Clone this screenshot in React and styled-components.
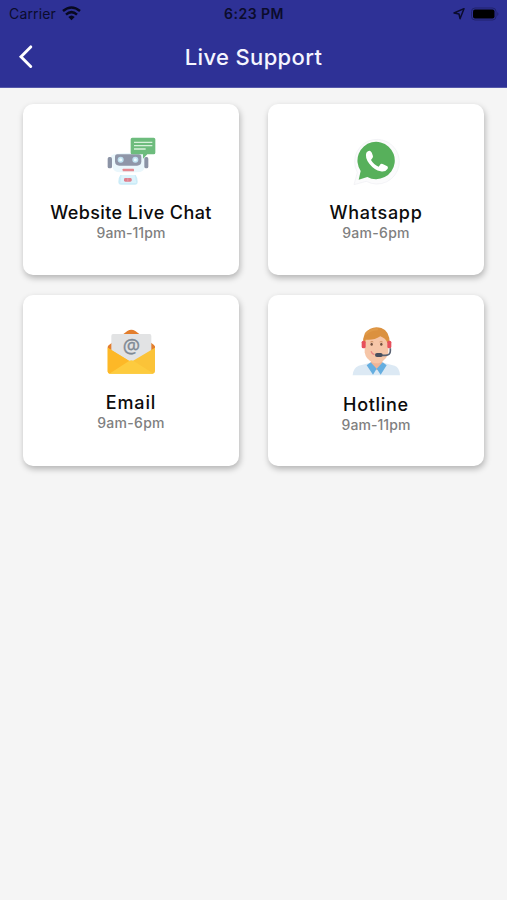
import React from 'react'
import styled, { createGlobalStyle } from 'styled-components'

const GlobalStyle = createGlobalStyle`
  * {
    box-sizing: border-box;
  }
  body {
    margin: 0;
    background-color: #f5f5f5;
    font-family: Inter, "Liberation Sans", sans-serif;
  }
`

const Screen = styled.div`
  min-height: 100vh;
  background-color: #f5f5f5;
`

const HeaderWrapper = styled.header`
  height: 88px;
  background-color: #2e3196;
  border-bottom: 1px solid #5558aa;
`

const StatusBar = styled.div`
  display: grid;
  grid-template-columns: 1fr auto 1fr;
  align-items: center;
  height: 27px;
  padding: 0 8px 0 9px;
  color: #0b0c2c;
  font-size: 14px;
`

const StatusGroup = styled.div`
  display: flex;
  align-items: center;
  justify-content: ${props => props.$end ? 'flex-end' : 'flex-start'};
  gap: ${props => props.$gap}px;
`

const Carrier = styled.span`
  letter-spacing: 0.15px;
`

const Clock = styled.span`
  font-weight: 600;
  letter-spacing: 0.5px;
`

const NavBar = styled.div`
  display: grid;
  grid-template-columns: 60px 1fr 60px;
  align-items: center;
  height: 60px;
`

const BackButton = styled.button`
  display: flex;
  align-items: center;
  height: 44px;
  padding: 0 0 0 18px;
  border: none;
  background: none;
`

const NavTitle = styled.h1`
  margin: 0;
  color: #f5f5ff;
  font-size: 22px;
  font-weight: 500;
  letter-spacing: 0.35px;
  line-height: 28px;
  text-align: center;
`

const CardGrid = styled.main`
  display: grid;
  grid-template-columns: 1fr 1fr;
  grid-auto-rows: 171px;
  gap: 20px 29px;
  padding: 16px 23px;
`

const Card = styled.section`
  display: flex;
  flex-direction: column;
  align-items: center;
  padding-top: 31px;
  border-radius: 10px;
  background-color: #fff;
  box-shadow: 1px 3px 6px rgba(0, 0, 0, 0.27);
`

const CardTitle = styled.h2`
  margin: ${props => props.$gap}px 0 0;
  color: #0c0c0c;
  font-size: 18px;
  font-weight: 500;
  letter-spacing: ${props => props.$spacing}px;
  line-height: 24px;
  white-space: nowrap;
`

const CardHours = styled.p`
  margin: 0;
  color: #808080;
  font-size: 14px;
  font-weight: 500;
  letter-spacing: ${props => props.$spacing}px;
  line-height: 15px;
`

const Icon = styled.svg`
  display: block;
  flex: none;
`

const WifiIcon = () => (
    <Icon width="19" height="15" viewBox="0 0 57 45" fill="none" stroke="#080920" strokeWidth="7.5">
        <path d="M3 15Q28.500 -6 54 15" />
        <path d="M12 26Q28.500 11 45 26" />
        <path d="M19 33Q28.500 24 38 33L28.500 43Z" fill="#080920" stroke="none" />
    </Icon>
)

const LocationIcon = () => (
    <Icon width="12" height="13" viewBox="0 0 36 39" fill="none" stroke="#0b0c2c" strokeWidth="4.500" strokeLinejoin="round">
        <path d="M3 18L33 5L21 35L18 21Z" />
    </Icon>
)

const BatteryIcon = () => (
    <Icon width="28" height="14" viewBox="0 0 28 14">
        <rect x="0.500" y="1" width="24.500" height="12" rx="3.500" fill="none" stroke="#20236d" />
        <rect x="2" y="2.500" width="21.500" height="9" rx="2" fill="#000" />
        <path d="M26.300 5Q28.500 7 26.300 9Z" fill="#20236d" />
    </Icon>
)

const BackIcon = () => (
    <Icon width="15" height="24" viewBox="0 0 15 24" fill="none" stroke="#fff" strokeWidth="2.900" strokeLinecap="round">
        <path d="M12.700 1.900L3 11.700L12.700 21.500" />
    </Icon>
)

const RobotIcon = () => (
    <Icon width="50" height="50" viewBox="33 30 150 150">
        <path d="M48 92Q58 84 100 84T150 92V122Q148 142 126 142H76Q54 142 52 122Z" fill="#eaf7fc" />
        <rect x="38" y="96" width="13" height="34" rx="5" fill="#8b93a5" />
        <rect x="148" y="96" width="12" height="34" rx="5" fill="#8b93a5" />
        <path d="M67 88H131Q139 88 139 96V109Q139 122 126 122H73Q60 122 60 109V96Q60 88 67 88Z" fill="#8f96a8" />
        <circle cx="77" cy="104" r="9" fill="#bfe2f1" />
        <circle cx="121" cy="104" r="9" fill="#bfe2f1" />
        <circle cx="77" cy="104" r="4.500" fill="#eefaff" />
        <circle cx="121" cy="104" r="4.500" fill="#eefaff" />
        <rect x="83" y="131" width="34" height="8" rx="2" fill="#e58991" />
        <path d="M76 150H122Q128 158 128 170Q128 179 120 179H78Q70 179 70 170Q70 158 76 150Z" fill="#ccecf8" />
        <path d="M80 150H119L124 174H76Z" fill="#dcf3fc" />
        <rect x="87" y="159" width="23" height="11" rx="4" fill="#df7f8d" />
        <path d="M98.500 160V169" stroke="#ecb1bd" strokeWidth="2" />
        <path d="M112 38H176Q181 38 181 43V83Q181 88 176 88H157L144 101V88H112Q107 88 107 83V43Q107 38 112 38Z" fill="#6dbc7d" />
        <path d="M117 52H172M117 62H172M117 72H152" stroke="#d7f1db" strokeWidth="4" />
    </Icon>
)

const WhatsappIcon = () => (
    <Icon width="50" height="50" viewBox="33 30 150 150">
        <path d="M42 179L52 142A67 67 0 1 1 79 169Z" fill="#fbfbfc" stroke="#eeeef3" strokeWidth="2" />
        <path d="M56 164L62 138A56 56 0 1 1 82 156Z" fill="#57b05b" />
        <path d="M79 83Q85 76 91 78Q96 81 99 94Q100 98 93 105Q101 119 116 125L122 117Q124 115 128 117L142 124Q145 126 143 131Q136 142 122 139Q103 135 88 116Q74 98 79 83Z" fill="#fff" />
    </Icon>
)

const EmailIcon = () => (
    <Icon width="50" height="50" viewBox="33 24 150 150">
        <path d="M38 90Q37 83 43 80L97 39Q109 31 121 39L176 80Q182 84 180 91L109 142Z" fill="#e37e2d" />
        <path d="M54 48H164Q169 48 169 54V132H49V54Q49 48 54 48Z" fill="#e2e3e4" />
        <path d="M38 89L108 132L180 89V160Q180 167 173 167H45Q38 167 38 160Z" fill="#fbc338" />
        <path d="M38 89L108 132L43 167Q38 166 38 160Z" fill="#fdb827" />
        <path d="M43 167L103 128Q109 125 115 128L176 167Z" fill="#fdcb3e" />
        <text x="109" y="106" textAnchor="middle" fontFamily="Open Sans, sans-serif" fontSize="58" fill="#7f8a95" stroke="#7f8a95">@</text>
    </Icon>
)

const HotlineIcon = () => (
    <Icon width="50" height="50" viewBox="33 24 150 150">
        <path d="M38 172Q39 150 56 143L91 134H130L164 143Q179 149 180 172Z" fill="#dce9f4" />
        <path d="M93 119H127V144L110 157L93 144Z" fill="#eeb497" />
        <path d="M92 133L110 152L99 170L80 142ZM128 133L110 152L122 170L140 142Z" fill="#65aee0" />
        <path d="M74 68Q77 43 108 43T145 68V103Q142 124 120 134Q110 138 99 134Q77 124 74 103Z" fill="#f6c6a8" />
        <path d="M70 77Q66 43 91 32Q106 24 124 30Q150 39 149 77L142 74Q137 61 121 55Q101 68 77 65L75 77Z" fill="#db913f" />
        <path d="M78 47Q91 34 111 34" fill="none" stroke="#e09a48" strokeWidth="7" strokeLinecap="round" />
        <rect x="65" y="68" width="12" height="23" rx="5" fill="#e74f5b" />
        <rect x="142" y="68" width="12" height="23" rx="5" fill="#e74f5b" />
        <ellipse cx="95" cy="79" rx="3.500" ry="4.500" fill="#72503f" />
        <ellipse cx="124" cy="79" rx="3.500" ry="4.500" fill="#72503f" />
        <path d="M91 72Q96 69 100 72M119 72Q124 69 128 72" fill="none" stroke="#b97745" strokeWidth="2" />
        <path d="M94 101Q96 107 102 109" fill="none" stroke="#e98583" strokeWidth="4" strokeLinecap="round" />
        <path d="M151 91V99Q151 112 136 112H119" fill="none" stroke="#5b6272" strokeWidth="5" />
        <rect x="105" y="105" width="23" height="12" rx="6" fill="#484e5d" />
    </Icon>
)

const CHANNELS = [
    { name: 'Website Live Chat', hours: '9am-11pm', icon: RobotIcon, gap: 16, spacing: 0.4, hoursSpacing: 0.05 },
    { name: 'Whatsapp', hours: '9am-6pm', icon: WhatsappIcon, gap: 16, spacing: 0.75, hoursSpacing: 0.3 },
    { name: 'Email', hours: '9am-6pm', icon: EmailIcon, gap: 15, spacing: 0.9, hoursSpacing: 0.3 },
    { name: 'Hotline', hours: '9am-11pm', icon: HotlineIcon, gap: 17, spacing: 0.7, hoursSpacing: 0.05 }
]

const Header = () => (
    <HeaderWrapper>
        <StatusBar>
            <StatusGroup $gap={6}>
                <Carrier>Carrier</Carrier>
                <WifiIcon />
            </StatusGroup>
            <Clock>6:23 PM</Clock>
            <StatusGroup $gap={6} $end>
                <LocationIcon />
                <BatteryIcon />
            </StatusGroup>
        </StatusBar>
        <NavBar>
            <BackButton aria-label="Back">
                <BackIcon />
            </BackButton>
            <NavTitle>Live Support</NavTitle>
        </NavBar>
    </HeaderWrapper>
)

class App extends React.Component {
    render() {
        return (
            <Screen>
                <GlobalStyle />
                <Header />
                <CardGrid>
                    {CHANNELS.map(({ name, hours, icon: ChannelIcon, gap, spacing, hoursSpacing }) => (
                        <Card key={name}>
                            <ChannelIcon />
                            <CardTitle $gap={gap} $spacing={spacing}>{name}</CardTitle>
                            <CardHours $spacing={hoursSpacing}>{hours}</CardHours>
                        </Card>
                    ))}
                </CardGrid>
            </Screen>
        )
    }
}

export default App
